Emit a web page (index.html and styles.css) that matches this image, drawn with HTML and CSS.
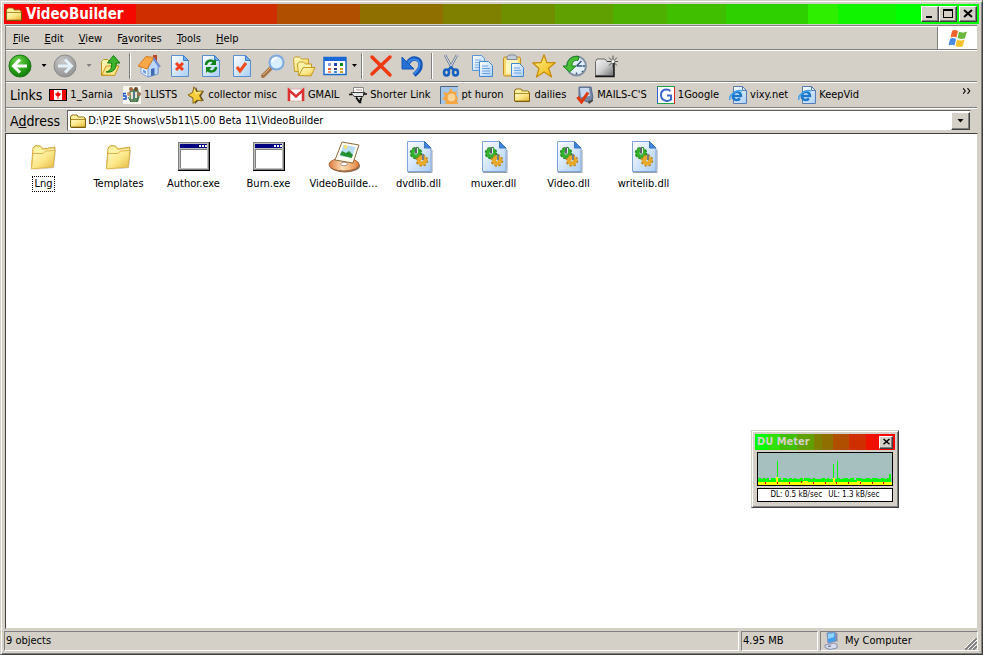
FILE: index.html
```html
<!DOCTYPE html>
<html lang="en">
<head>
<meta charset="utf-8">
<title>VideoBuilder</title>
<link rel="stylesheet" href="styles.css">
</head>
<body>
<svg class="defs" aria-hidden="true">
  <defs>
    <linearGradient id="gFolder" x1="0" y1="0" x2="1" y2="1"><stop offset="0" stop-color="#fffbc8"/><stop offset=".5" stop-color="#fce88a"/><stop offset="1" stop-color="#e5b93e"/></linearGradient>
    <linearGradient id="gPage" x1="0" y1="0" x2="1" y2="1"><stop offset="0" stop-color="#ffffff"/><stop offset="1" stop-color="#a9cdf6"/></linearGradient>
    <radialGradient id="gGreen" cx=".4" cy=".3" r=".8"><stop offset="0" stop-color="#7ed65a"/><stop offset=".5" stop-color="#2da51c"/><stop offset="1" stop-color="#0c6b08"/></radialGradient>
    <radialGradient id="gGrey" cx=".4" cy=".3" r=".8"><stop offset="0" stop-color="#c8c8c8"/><stop offset="1" stop-color="#8c8c8c"/></radialGradient>
    <linearGradient id="gStar" x1="0" y1="0" x2="1" y2="1"><stop offset="0" stop-color="#fff79a"/><stop offset="1" stop-color="#f0b000"/></linearGradient>
    <linearGradient id="gSilver" x1="0" y1="0" x2="1" y2="1"><stop offset="0" stop-color="#f4f4f4"/><stop offset=".5" stop-color="#d0d0d0"/><stop offset="1" stop-color="#707070"/></linearGradient>
    <linearGradient id="gDisc" x1="0" y1="0" x2="1" y2="0"><stop offset="0" stop-color="#e07a40"/><stop offset=".45" stop-color="#ffe2b8"/><stop offset="1" stop-color="#e2803c"/></linearGradient>
  </defs>
  <symbol id="folder16" viewBox="0 0 18 18">
    <path d="M1.500 15V4.500L3 3h5l1.500 2H15l1.500 1.500V15z" fill="#d9a520" stroke="#8a6a14"/>
    <path d="M2 5l1.500-1.500h4L9 5.500h6V8H2z" fill="#fff0a0"/>
    <path d="M2 14.500V8.500L4 7h12v7.500z" fill="url(#gFolder)"/>
    <path d="M2 7.500h14" stroke="#b48c28"/>
    <path d="M2 15.500h14.500V7" fill="none" stroke="#7a5c10"/>
  </symbol>
  <symbol id="page" viewBox="0 0 24 24">
    <path d="M3.500 1.500h12l5 5v16h-17z" fill="url(#gPage)" stroke="#5a8fd0"/>
    <path d="M15.500 1.500v5h5z" fill="#6eaaf0" stroke="#3f7fce"/>
  </symbol>
  <symbol id="back" viewBox="0 0 24 24">
    <circle cx="12" cy="12" r="11" fill="url(#gGreen)" stroke="#1b7a14"/>
    <path d="M12 5.500L5.500 12l6.500 6.500M6.500 12H19" fill="none" stroke="#fff" stroke-width="3"/>
  </symbol>
  <symbol id="forward" viewBox="0 0 24 24">
    <circle cx="12" cy="12" r="11" fill="url(#gGrey)" stroke="#8d8d8d"/>
    <path d="M12 5.500l6.500 6.500-6.500 6.500M17.500 12H5" fill="none" stroke="#e4f0f8" stroke-width="3"/>
  </symbol>
  <symbol id="up" viewBox="0 0 24 24">
    <path d="M3.500 21.500V7.500l2-2h4l2 2h7v4l2 1-4 9z" fill="url(#gFolder)" stroke="#c09018"/>
    <path d="M4 21l4-9h13l-4.500 9.500z" fill="#fbe488" stroke="#c79a26"/>
    <path d="M8 18c5-1 6-5 5.500-9H9.500L15.500 1.500l6.500 7.500h-4c.5 6-3 10-10 9z" fill="#3cb52c" stroke="#147a10"/>
  </symbol>
  <symbol id="home" viewBox="0 0 24 24">
    <path d="M16 1h4v8h-4z" fill="#b84428"/>
    <path d="M4 12v7l7 4 10-3v-8l-5-7z" fill="#e8f0ff" stroke="#86a2da"/>
    <path d="M11 14v9l10-3v-8l-5-7z" fill="#bdd6fb" stroke="#7a9ad2"/>
    <path d="M1 12L9 2.500l8 1L10 15z" fill="#f8a848" stroke="#d87820" stroke-linejoin="round"/>
    <path d="M16.500 4l6.500 9" stroke="#6a8cd0" stroke-width="2"/>
    <path d="M14 15l3.500-1v7L14 22z" fill="#3c68b0"/><path d="M6 15.500l3 1.500v3l-3-1.500z" fill="#6c9ce4"/>
  </symbol>
  <symbol id="stop" viewBox="0 0 24 24"><use href="#page"/><path d="M8 9l7 7M15 9l-7 7" stroke="#f0401c" stroke-width="3"/></symbol>
  <symbol id="refresh" viewBox="0 0 24 24"><use href="#page"/>
    <path d="M7 11c0-4 5-6 8-3" fill="none" stroke="#12861a" stroke-width="2.500"/><path d="M17 5v6h-6z" fill="#12861a"/>
    <path d="M17 13c0 4-5 6-8 3" fill="none" stroke="#12861a" stroke-width="2.500"/><path d="M7 19v-6h6z" fill="#12861a"/>
  </symbol>
  <symbol id="check" viewBox="0 0 24 24"><use href="#page"/><path d="M7 13l3 4 6-8" fill="none" stroke="#f04a1c" stroke-width="3"/></symbol>
  <symbol id="search" viewBox="0 0 24 24">
    <path d="M2 22l8-8" stroke="#a77646" stroke-width="4" stroke-linecap="round"/><path d="M2 21l7-7" stroke="#e6b088" stroke-width="1"/>
    <circle cx="15.500" cy="8.500" r="7" fill="#d8efff" stroke="#7da9e0" stroke-width="2"/>
    <path d="M11 8c0-3 3-4 5-4" stroke="#fff" stroke-width="2" fill="none"/>
  </symbol>
  <symbol id="folders" viewBox="0 0 24 24">
    <path d="M2.500 17.500l-1-13 2-1.500h4l2 2h7v12z" fill="url(#gFolder)" stroke="#c79a26"/>
    <path d="M6.500 21.500l-1-12 2-1.500h4l2 2h6v11z" fill="#fff3a8" stroke="#c79a26"/>
    <path d="M7 21.500l4-8h12l-4 8.500z" fill="url(#gFolder)" stroke="#c79a26"/>
  </symbol>
  <symbol id="views" viewBox="0 0 24 24">
    <rect x="1" y="3.500" width="22" height="17" fill="#fff" stroke="#1b68cc" stroke-width="1.500"/><path d="M1 3h22v4H1z" fill="#1b68d8"/>
    <path d="M5 9h3v3H5z" fill="#8f9ad8"/><path d="M11 9h3v3h-3z" fill="#2040c8"/><path d="M17 9h3v3h-3z" fill="#0a8a18"/>
    <path d="M5 14h3v2H5z" fill="#f06030"/><path d="M11 14h3v2h-3z" fill="#383878"/><path d="M17 14h3v2h-3z" fill="#d0a020"/>
    <path d="M5 17h3v2H5z" fill="#f09080"/><path d="M11 17h3v2h-3z" fill="#4484dc"/><path d="M17 17h3v2h-3z" fill="#d0a020"/>
  </symbol>
  <symbol id="delete" viewBox="0 0 24 24"><path d="M3 3l18 18M21 3L3 20" stroke="#ee3a10" stroke-width="3.500" stroke-linecap="round"/></symbol>
  <symbol id="undo" viewBox="0 0 24 24">
    <path d="M8 9C12 2 21 4 20.500 11c0 5-3 7-6.500 10" fill="none" stroke="#1557b8" stroke-width="4.500"/>
    <path d="M8 9C12 3 20 5 19.500 11c0 4-2 6-5.500 9" fill="none" stroke="#3c86e6" stroke-width="2"/>
    <path d="M2 3v12h12l-4-4-4-4z" fill="#2570d4" stroke="#1557b8"/>
  </symbol>
  <symbol id="cut" viewBox="0 0 24 24">
    <path d="M6 1l8 15M18 1l-8 15" stroke="#66758c" stroke-width="2.500"/><path d="M6 1l7 13M18 1l-7 13" stroke="#dfe8f4"/>
    <ellipse cx="7.500" cy="18.500" rx="2.500" ry="3" fill="none" stroke="#1560c0" stroke-width="2.500"/><ellipse cx="16.500" cy="18.500" rx="2.500" ry="3" fill="none" stroke="#1560c0" stroke-width="2.500"/>
    <path d="M9 16l3-3 3 3" fill="none" stroke="#1560c0" stroke-width="2"/>
  </symbol>
  <symbol id="copy" viewBox="0 0 24 24">
    <path d="M2.500 1.500h9l3 3v12h-12z" fill="url(#gPage)" stroke="#5a96da"/><path d="M5 6h6M5 8.500h6M5 11h6M5 13.500h5" stroke="#7fb0e8"/>
    <path d="M9.500 7.500h9l4 4v11h-13z" fill="url(#gPage)" stroke="#4488d4"/><path d="M12 12h6M12 14.500h8M12 17h8M12 19.500h8" stroke="#6aa4e4"/>
  </symbol>
  <symbol id="paste" viewBox="0 0 24 24">
    <rect x="2.500" y="3" width="17" height="19" rx="1.500" fill="#f8d96c" stroke="#c08c20"/><path d="M5 6h12v14H5z" fill="#fff4bc"/>
    <path d="M6 5.500V3l2-2h6l2 2v2.500z" fill="#c4ccd8" stroke="#808894"/>
    <path d="M10.500 9.500h8l4 4v9h-12z" fill="url(#gPage)" stroke="#4488d4"/><path d="M13 14h6M13 16.500h7M13 19h7" stroke="#6aa4e4"/>
  </symbol>
  <symbol id="star" viewBox="0 0 24 24"><path d="M12 .8l2.800 7.700 8.400.2-6.600 5.600 3 8.700-7.600-5L4.500 23l2.500-8.500L.8 9l8.200-.5z" fill="url(#gStar)" stroke="#c98d10" stroke-width="1.300" stroke-linejoin="round"/></symbol>
  <symbol id="history" viewBox="0 0 24 24">
    <circle cx="13.500" cy="12" r="9.500" fill="#e4eef8" stroke="#8492a4" stroke-width="2"/>
    <path d="M13.500 12l5-5M13.500 12h6M13.500 18.500v2M20 12h2M19 17l1 1" stroke="#34587c" stroke-width="1.500"/>
    <path d="M4 12C4 5 10 1.500 16 2.500l-1 4c-4-1-6 2-6 5.500h4L6.500 18 0 12z" fill="#48be38" stroke="#15801a"/>
  </symbol>
  <symbol id="newfolder" viewBox="0 0 24 24">
    <path d="M1.500 21.500v-14L3 5h8l2 2.500h6.500v14z" fill="url(#gSilver)" stroke="#686868"/><path d="M1 22.500h19V8" fill="none" stroke="#181818" stroke-width="1.500"/>
    <path d="M19 1.500v12M13 7.500h11M15 3.500l8 8M23 3.500l-8 8" stroke="#303030" stroke-width=".8"/><circle cx="19" cy="7.500" r="1.500" fill="#fff"/>
  </symbol>
  <symbol id="canada" viewBox="0 0 18 18"><rect x=".5" y="3.500" width="17" height="11" fill="#fff" stroke="#000"/><path d="M1 4h4v10H1zM13 4h4v10h-4z" fill="#f00"/><path d="M9 5l1 2 2 .5-1 2-1.500 1V13h-1v-2.500L7 9.500l-1-2L8 7z" fill="#f00"/></symbol>
  <symbol id="people" viewBox="0 0 18 18">
    <path d="M0 0h18v18H0z" fill="#f6f6ee"/><path d="M3 7.500H0V10h3v3H0" stroke="#1554d0" stroke-width="1.500" fill="none"/>
    <path d="M6 6l2-3 7 0 2 6-2 7H7z" fill="#5c8a58"/><circle cx="8" cy="3" r="2" fill="#a86840"/><circle cx="13" cy="3" r="2" fill="#704830"/><circle cx="6" cy="8" r="2" fill="#c09068"/><circle cx="16" cy="8" r="2" fill="#9c6c50"/>
    <path d="M8 6h2v7H8zM12 6h2v6h-2z" fill="#e8e4d0"/><path d="M10 5h2v8h-2z" fill="#4c7a8c"/><path d="M5 11l3 5M16 11l-3 5" stroke="#3c6450"/>
  </symbol>
  <symbol id="goldstar" viewBox="0 0 18 18"><path d="M8 1l2 5 6-1-3 5 3 5-5-1-4 4-1-5-5-3 5-2z" fill="#5a4820" transform="translate(1 0)"/><path d="M7 .8l2.500 4.700 6.500-.5-3.500 4.500L15 15l-5-1-4 3.500V12L1 9l4.500-2.500z" fill="#f6ce3c" stroke="#8c6814"/><path d="M7.500 3.500l1 4 5-1.500" stroke="#fff4a8" fill="none"/></symbol>
  <symbol id="mail" viewBox="0 0 18 18"><path d="M1 3h16v12H1z" fill="#fff" stroke="#d8b0a8"/><path d="M2 15V4l7 6.500L16 4v11" fill="none" stroke="#e03030" stroke-width="2.500"/></symbol>
  <symbol id="shorter" viewBox="0 0 18 18"><path d="M4.500 1.500h10v5h-10z" fill="#fff" stroke="#888"/><path d="M2 6.500h14l-2 4H5z" fill="#e4e4e4" stroke="#404040"/><path d="M7 10.500h6l-1 4h-2z" fill="#d8d8d8" stroke="#202020"/><path d="M0 8.500h3M14 8h4M7 11.500l3.500 5h1V12" stroke="#111" stroke-width="1.500" fill="none"/><path d="M7 4h6" stroke="#c89090"/></symbol>
  <symbol id="sun" viewBox="0 0 18 18"><path d="M0 0h18v18H0z" fill="#a5c8ea"/><path d="M.5 18V.5H18" fill="none" stroke="#4c6884"/><path d="M11 2l2 4 4-1-1 4 2 3-1 2 1 4H5l1-3-4-2 3-3-2-4 5 1z" fill="#f6a840"/><circle cx="11.500" cy="11.500" r="4.500" fill="#fbd49a" stroke="#f0a048"/></symbol>
  <symbol id="mails" viewBox="0 0 18 18"><path d="M3 1h12l2 11-5 4-9-3z" fill="#7888a8" stroke="#56688c"/><path d="M4 2h9l1 8-9 1z" fill="#c8d8ee"/><path d="M12 16l5-3v2l-4 3z" fill="#444"/><path d="M1.500 11l4 5L12 6.500" fill="none" stroke="#e0380c" stroke-width="3"/></symbol>
  <symbol id="google" viewBox="0 0 18 18"><path d="M0 0h18v18H0z" fill="#fff"/><path d="M.5 0v18" stroke="#2e62d4"/><path d="M0 .5h18" stroke="#20a048"/><path d="M17.500 1v17" stroke="#d82828"/><path d="M0 17.500h17" stroke="#20a048"/><path d="M13.500 5C10 2 4 3.500 4 9s6 7.500 10 4.500V9.500h-4" fill="none" stroke="#3c66c8" stroke-width="2"/></symbol>
  <symbol id="ie" viewBox="0 0 18 18"><path d="M4.500.5h9l4 4v13h-13z" fill="url(#gPage)" stroke="#5a7cb4"/><path d="M13.500.5v4h4z" fill="#dceaff" stroke="#5a7cb4"/><path d="M11 12.500c-3 3-8 1-7-3.500s8-3.500 8 1H4.500" fill="none" stroke="#1c78cc" stroke-width="2.500"/><path d="M1 14C-1 9 8 3 13 5" fill="none" stroke="#46a4ec" stroke-width="1.500"/></symbol>
  <symbol id="winflag" viewBox="0 0 20 18">
    <path d="M4 2c2-1.500 4-1 6 0L8.500 8.500c-2-1-4-1-6 0z" fill="#f0642c"/><path d="M11 2.500c2 1 4 1.500 8 0L17 9c-2 1.500-5 1-7.500 0z" fill="#6cb83c"/>
    <path d="M2 10c2-1.500 4-1 6 0l-1.500 6.500c-2-1-4-1-6 0z" fill="#4a8ce4"/><path d="M9 10.500c2 1 4.500 1.500 7.500 0L15 17c-2 1.500-5 1-7.500 0z" fill="#f8c42c"/>
  </symbol>
  <symbol id="folder32" viewBox="0 0 32 32">
    <path d="M6 29l20-2 2-18-2-1-2 18z" fill="#a8a8a8" opacity=".6"/>
    <path d="M3.500 27L5 7l2.500-2.500 5 .5 2.500 3 12-2-2 19z" fill="#f3d468" stroke="#d2a43c"/>
    <path d="M5.500 8l2-2.500 4.500.5 2.500 3L26 7.500v3L5.500 13z" fill="#fff3a8"/>
    <path d="M3.500 28L5 12.500h10l2.500-2.500 9.500-.5L25 26z" fill="url(#gFolder)" stroke="#dfb64e"/>
  </symbol>
  <symbol id="exe32" viewBox="0 0 32 32">
    <path d="M0 1h32v29H0z" fill="#000"/><path d="M0 1h31v28H0z" fill="#808080"/><path d="M1 2h29v26H1z" fill="#c0c0c0"/><path d="M2 3h27v4H2z" fill="#000080"/>
    <path d="M21 4h2v2h-2zM24 4h2v2h-2zM27 4h2v2h-2z" fill="#fff"/><path d="M2 8h27v19H2z" fill="#808080"/><path d="M3 9h26v18H3z" fill="#fff"/>
  </symbol>
  <symbol id="video32" viewBox="0 0 32 32">
    <ellipse cx="17" cy="25" rx="15" ry="6.500" fill="#87705c"/><ellipse cx="16" cy="23.500" rx="15" ry="6.500" fill="url(#gDisc)" stroke="#b46430"/><ellipse cx="16" cy="23" rx="3.500" ry="1.800" fill="#fff" stroke="#b09080"/>
    <path d="M14 1l17 3-6 18-18-3z" fill="#fffdf4" stroke="#8c6c3c"/><path d="M15.500 4l12 2-4 11-12-2z" fill="#b8def8"/><path d="M12 14l2-4 4 2 3-2 4 4-1.500 3z" fill="#249030"/><circle cx="17.500" cy="6" r="1.800" fill="#fce05c"/>
  </symbol>
  <symbol id="dll32" viewBox="0 0 32 32">
    <path d="M5 31.500h24V9" stroke="#9aa0aa" stroke-width="1" fill="none"/>
    <path d="M4.500.5h17l6.500 6.500v23.500H4.500z" fill="url(#gPage)" stroke="#7ea4da"/><path d="M21.500.5V7H28z" fill="#3c86e0" stroke="#3c74be"/>
    <circle cx="13" cy="12" r="3.500" fill="none" stroke="#35b030" stroke-width="4"/><circle cx="13" cy="12" r="5.500" fill="none" stroke="#23881f" stroke-width="1.500" stroke-dasharray="2.500 1.800"/><path d="M13 6.500v6" stroke="#5c6068" stroke-width="2"/><path d="M14.500 7v5" stroke="#e8ecf0"/>
    <circle cx="19" cy="19.500" r="3" fill="none" stroke="#e8a828" stroke-width="4"/><circle cx="19" cy="19.500" r="5.500" fill="none" stroke="#c08418" stroke-width="1.500" stroke-dasharray="2.500 1.800"/><path d="M20 13v6" stroke="#787c84" stroke-width="2"/>
  </symbol>
  <symbol id="computer" viewBox="0 0 18 18"><path d="M4 1l8-1 1 9-8 2z" fill="#3ea0f0" stroke="#8090b8"/><path d="M5 2l6-1v4L5 7z" fill="#90d4fc"/><path d="M13 .5l1.500 1v9l-1.500-2z" fill="#8088ac"/><path d="M2 13l9-2 3 1.500V16l-7 1.500-5-2z" fill="#d8dcec" stroke="#8890b0"/><path d="M5 14.500l3-.7" stroke="#505878"/></symbol>
</svg>

<div class="window">
  <header class="titlebar">
    <svg class="ic18"><use href="#folder16"/></svg>
    <h1>VideoBuilder</h1>
    <div class="winbtns">
      <button aria-label="Minimize"><svg viewBox="0 0 12 10"><path d="M2 7h6v2H2z"/></svg></button>
      <button aria-label="Maximize"><svg viewBox="0 0 12 10"><path d="M1 0h10v9H1zM2 2v6h8V2z" fill-rule="evenodd"/></svg></button>
      <button class="close" aria-label="Close"><svg viewBox="0 0 12 10"><path d="M2 1l8 7M10 1L2 8" stroke="#000" stroke-width="2"/></svg></button>
    </div>
  </header>

  <div class="bars">
    <div class="menurow">
      <nav class="menu">
        <button><u>F</u>ile</button><button><u>E</u>dit</button><button><u>V</u>iew</button><button>F<u>a</u>vorites</button><button><u>T</u>ools</button><button><u>H</u>elp</button>
      </nav>
      <div class="throbber"><svg><use href="#winflag"/></svg></div>
    </div>

    <div class="toolbar">
      <button class="tool" aria-label="Back"><svg><use href="#back"/></svg></button><button class="drop" aria-label="Back list"></button>
      <button class="tool" aria-label="Forward"><svg><use href="#forward"/></svg></button><button class="drop off" aria-label="Forward list"></button>
      <button class="tool" aria-label="Up"><svg><use href="#up"/></svg></button>
      <span class="sep"></span>
      <button class="tool" aria-label="Home"><svg><use href="#home"/></svg></button>
      <button class="tool" aria-label="Stop"><svg><use href="#stop"/></svg></button>
      <button class="tool" aria-label="Refresh"><svg><use href="#refresh"/></svg></button>
      <button class="tool" aria-label="Properties"><svg><use href="#check"/></svg></button>
      <button class="tool" aria-label="Search"><svg><use href="#search"/></svg></button>
      <button class="tool" aria-label="Folders"><svg><use href="#folders"/></svg></button>
      <button class="tool" aria-label="Views"><svg><use href="#views"/></svg></button><button class="drop near" aria-label="Views list"></button>
      <span class="sep"></span>
      <button class="tool" aria-label="Delete"><svg><use href="#delete"/></svg></button>
      <button class="tool" aria-label="Undo"><svg><use href="#undo"/></svg></button>
      <span class="sep"></span>
      <button class="tool" aria-label="Cut"><svg><use href="#cut"/></svg></button>
      <button class="tool" aria-label="Copy"><svg><use href="#copy"/></svg></button>
      <button class="tool" aria-label="Paste"><svg><use href="#paste"/></svg></button>
      <button class="tool" aria-label="Favorites"><svg><use href="#star"/></svg></button>
      <button class="tool" aria-label="History"><svg><use href="#history"/></svg></button>
      <button class="tool" aria-label="New folder"><svg><use href="#newfolder"/></svg></button>
    </div>

    <div class="linkbar">
      <span class="barlabel">Links</span>
      <nav class="links">
        <a href="#"><svg class="ic18"><use href="#canada"/></svg>1_Sarnia</a>
        <a href="#"><svg class="ic18"><use href="#people"/></svg>1LISTS</a>
        <a href="#"><svg class="ic18"><use href="#goldstar"/></svg>collector misc</a>
        <a href="#"><svg class="ic18"><use href="#mail"/></svg>GMAIL</a>
        <a href="#"><svg class="ic18"><use href="#shorter"/></svg>Shorter Link</a>
        <a href="#"><svg class="ic18"><use href="#sun"/></svg>pt huron</a>
        <a href="#"><svg class="ic18"><use href="#folder16"/></svg>dailies</a>
        <a href="#"><svg class="ic18"><use href="#mails"/></svg>MAILS-C'S</a>
        <a href="#"><svg class="ic18"><use href="#google"/></svg>1Google</a>
        <a href="#"><svg class="ic18"><use href="#ie"/></svg>vixy.net</a>
        <a href="#"><svg class="ic18"><use href="#ie"/></svg>KeepVid</a>
      </nav>
      <button class="more" aria-label="More links"><svg viewBox="0 0 8 5"><path d="M0 0l2 2.500L0 5M4 0l2 2.500L4 5" fill="none" stroke="#000" stroke-width="1"/></svg></button>
    </div>

    <div class="addressbar">
      <label class="barlabel" for="address">A<u>d</u>dress</label>
      <div class="field">
        <svg class="ic18"><use href="#folder16"/></svg>
        <input id="address" type="text" value="D:\P2E Shows\v5b11\5.00 Beta 11\VideoBuilder">
        <button aria-label="Address list"></button>
      </div>
    </div>
  </div>

  <main class="files">
    <button class="file selected"><svg><use href="#folder32"/></svg><span>Lng</span></button>
    <button class="file"><svg><use href="#folder32"/></svg><span>Templates</span></button>
    <button class="file"><svg><use href="#exe32"/></svg><span>Author.exe</span></button>
    <button class="file"><svg><use href="#exe32"/></svg><span>Burn.exe</span></button>
    <button class="file"><svg><use href="#video32"/></svg><span>VideoBuilde...</span></button>
    <button class="file"><svg><use href="#dll32"/></svg><span>dvdlib.dll</span></button>
    <button class="file"><svg><use href="#dll32"/></svg><span>muxer.dll</span></button>
    <button class="file"><svg><use href="#dll32"/></svg><span>Video.dll</span></button>
    <button class="file"><svg><use href="#dll32"/></svg><span>writelib.dll</span></button>
  </main>

  <footer class="status">
    <div class="cell grow">9 objects</div>
    <div class="cell size">4.95 MB</div>
    <div class="cell zone"><svg class="ic18"><use href="#computer"/></svg>My Computer
      <svg class="grip" viewBox="0 0 12 12"><path d="M0 12L12 0M4 12l8-8M8 12l4-4" stroke="#808080" stroke-width="2"/><path d="M-1 11L11-1M3 11l9-9M7 11l5-5" stroke="#fff"/></svg>
    </div>
  </footer>
</div>

<section class="meter" aria-label="DU Meter">
  <header><h2>DU Meter</h2><button aria-label="Close meter"><svg viewBox="0 0 12 10"><path d="M2 1l8 7M10 1L2 8" stroke="#000" stroke-width="2"/></svg></button></header>
  <svg class="graph" viewBox="0 0 134 32" preserveAspectRatio="none" shape-rendering="crispEdges">
    <path d="M0 32V25h3v1h2v-1h2v1h1v-1h3v2h2v-2h4v1h1v-1h5v2h2v-2h4v1h2v-1h3v1h2v-1h2v1h4v-1h3v2h1v-2h6v1h3v-1h2v1h7v-1h3v1h2v-1h2v1h9v-1h2v1h3v-1h5v1h2v-1h4v2h2v-2h6v1h3v-1h5v1h2v-1h6v1h3v-1h4v1h2v-1h2v-4h2v11z" fill="#00ff00"/>
    <path d="M19 8h1v18h-1zM75 11h1v15h-1zM79 8h1v18h-1z" fill="#00ff00"/>
    <path d="M0 32V29h18v-5h2v5h25v-1h5v1h25v-4h2v4h22v-1h4v1h31v3z" fill="#ffff00"/>
    <path d="M7 29h1v2H7zM19 29h1v2h-1zM31 29h1v2h-1zM43 28h1v2h-1zM55 29h1v2h-1zM67 29h1v2h-1zM78 29h1v2h-1zM90 29h1v2h-1zM102 29h1v2h-1zM114 29h1v2h-1zM125 29h1v2h-1z" fill="#e00000"/>
  </svg>
  <p><span>DL: 0.5 kB/sec</span><span>UL: 1.3 kB/sec</span></p>
</section>
</body>
</html>
```
FILE: styles.css
```css
* { box-sizing: border-box; }
html, body { height: 100%; margin: 0; }
body {
  position: relative;
  background: #d4d0c8;
  font: 11px/14px "DejaVu Sans Condensed", "Noto Sans", sans-serif;
  color: #000;
  overflow: hidden;
}
button { font: inherit; color: inherit; border: 0; padding: 0; background: none; }
h1, h2, p { margin: 0; }
svg { display: block; flex: none; }
.defs { position: absolute; width: 0; height: 0; }
.ic18 { width: 18px; height: 18px; }

.window {
  display: flex;
  flex-direction: column;
  height: 100%;
  padding: 2px 3px 2px 2px;
  border: 1px solid;
  border-color: #d4d0c8 #404040 #404040 #d4d0c8;
  box-shadow: inset 1px 1px #fff, inset -1px -1px #808080;
}

.titlebar {
  display: flex;
  align-items: center;
  gap: 3px;
  height: 21px;
  margin: 0 0 0 1px;
  padding: 0 2px 0 1px;
  border-top: 1px solid #d4d0c8;
  background: linear-gradient(90deg,
    #ff0000 0 9%, #f40800 9% 13.500%, #cf2f00 13.500% 28%, #b04f00 28% 36.500%,
    #8f6f00 36.500% 45%, #7f7f00 45% 51%, #6f8f00 51% 56.500%, #60a000 56.500% 62.500%,
    #4eb000 62.500% 68%, #3fbf00 68% 74%, #2fd000 74% 82.500%, #2fef00 82.500% 85.500%,
    #10f400 85.500% 91.500%, #00ff00 91.500%);
}
.titlebar h1 {
  flex: 1;
  color: #fff;
  font: bold 15px/18px "DejaVu Sans Condensed", "Noto Sans", sans-serif;
}
.winbtns { display: flex; }
.winbtns button, .meter header button {
  display: grid;
  place-items: center;
  width: 18px;
  height: 16px;
  background: #d4d0c8;
  border: 1px solid;
  border-color: #fff #404040 #404040 #fff;
  box-shadow: inset -1px -1px #808080;
}
.winbtns svg { width: 12px; height: 10px; }
.winbtns .close { margin-left: 2px; }

.bars {
  margin: 1px 2px 0 2px;
  border-left: 1px solid #808080;
}
.menurow, .toolbar, .linkbar, .addressbar {
  display: flex;
  align-items: center;
  border-top: 1px solid #808080;
  box-shadow: inset 0 1px #fff;
}
.menurow { height: 24px; }
.menu { display: flex; flex: 1; padding: 2px 0 0 7px; gap: 15px; }
.throbber {
  display: grid;
  place-items: center;
  align-self: stretch;
  width: 40px;
  margin-top: 1px;
  border-left: 1px solid #808080;
  background: #fff;
}
.throbber svg { width: 20px; height: 18px; }

.toolbar { height: 32px; }
.tool { display: grid; place-items: center; width: 31px; height: 28px; padding-right: 4px; }
.tool svg { width: 24px; height: 24px; }
.drop { width: 14px; height: 28px; display: grid; place-items: center; }
.drop.near { width: 7px; padding-right: 4px; }
.drop::before, .field button::before {
  content: "";
  width: 5px;
  height: 3px;
  background: #000;
  clip-path: polygon(0 0, 100% 0, 50% 100%);
}
.drop.off::before { background: #808080; }
.sep {
  width: 2px;
  height: 26px;
  margin: 0 4px 0 2px;
  background: linear-gradient(90deg, #808080 50%, #fff 50%);
}

.linkbar { height: 26px; }
.barlabel { padding-left: 4px; font-size: 14px; line-height: 18px; }
.links { display: flex; flex: 1; gap: 10px; margin-left: 7px; }
.links a {
  display: flex;
  align-items: center;
  gap: 3px;
  color: #000;
  text-decoration: none;
  white-space: nowrap;
}
.more { align-self: start; padding: 6px 5px; }
.more svg { width: 9px; height: 6px; }

.addressbar { height: 25px; padding: 1px 6px 0 0; }
.field {
  display: flex;
  align-items: center;
  flex: 1;
  height: 21px;
  margin-left: 7px;
  padding-left: 1px;
  border: 1px solid;
  border-color: #606060 #d4d0c8 #d4d0c8 #606060;
  background: #fff;
}
.field input {
  flex: 1;
  min-width: 0;
  padding: 0 1px;
  border: 0;
  outline: 0;
  background: none;
  font: inherit;
  color: inherit;
}
.field button {
  display: grid;
  place-items: center;
  width: 19px;
  height: 18px;
  background: #d4d0c8;
  border: 1px solid;
  border-color: #fff #404040 #404040 #fff;
  box-shadow: inset -1px -1px #808080;
}
.field button::before { width: 7px; height: 4px; }

.files {
  flex: 1;
  display: grid;
  grid-template-columns: repeat(auto-fill, 75px);
  align-content: start;
  margin: 1px 1px 0 2px;
  padding-top: 7px;
  border: 1px solid;
  border-color: #404040 #d4d0c8 #d4d0c8 #404040;
  background: #fff;
}
.file { display: flex; flex-direction: column; align-items: center; gap: 3px; }
.file svg { width: 32px; height: 32px; }
.file span { padding: 0 1px; border: 1px solid transparent; white-space: nowrap; }
.file.selected span { border: 1px dotted #000; }

.status { display: flex; gap: 2px; height: 23px; padding: 2px 1px 1px 1px; }
.cell {
  display: flex;
  align-items: center;
  gap: 4px;
  padding-left: 1px;
  border: 1px solid;
  border-color: #808080 #fff #fff #808080;
}
.grow { flex: 1; }
.size { width: 77px; }
.zone { width: 158px; padding-left: 2px; }
.grip { width: 12px; height: 12px; margin-left: auto; align-self: end; }

.meter {
  position: absolute;
  right: 84px;
  bottom: 147px;
  width: 148px;
  padding: 3px 3px 5px 3px;
  background: #d4d0c8;
  border: 1px solid;
  border-color: #d4d0c8 #404040 #404040 #d4d0c8;
  box-shadow: inset 1px 1px #fff, inset -1px -1px #808080;
}
.meter header {
  display: flex;
  align-items: center;
  justify-content: space-between;
  height: 16px;
  padding: 0 2px;
  background: linear-gradient(90deg,
    #00ff00 0 9%, #2fe000 9% 18%, #3fbf00 18% 30%, #60a000 30% 42%, #7f7f00 42% 48%,
    #8f6f00 48% 56%, #b04f00 56% 67%, #cf2f00 67% 79%, #f01000 79% 88%, #ff0000 88%);
}
.meter h2 {
  font: bold 11px/14px "DejaVu Sans Condensed", sans-serif;
  color: #d4d0c8;
}
.meter header button { width: 14px; height: 13px; }
.meter header svg { width: 9px; height: 8px; }
.graph {
  width: 136px;
  height: 34px;
  margin: 2px 2px;
  border: 1px solid #000;
  background: #a6c0c0;
}
.meter p {
  display: flex;
  justify-content: center;
  gap: 6px;
  margin: 0 2px;
  border: 1px solid #000;
  background: #fff;
  font-size: 8px;
  line-height: 12px;
}
```
